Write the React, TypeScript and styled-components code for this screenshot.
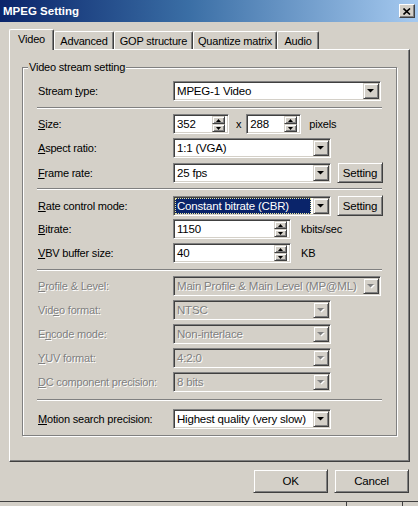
import React from "react";
import styled, { createGlobalStyle } from "styled-components";

const GlobalStyle = createGlobalStyle`
  html, body {
    margin: 0;
    padding: 0;
    background: #d4d0c8;
  }
  body {
    font-family: "Liberation Sans", Arial, sans-serif;
    font-size: 11px;
    letter-spacing: -0.2px;
    color: #000;
  }
`;

const Window = styled.div`
  width: 418px;
  height: 506px;
  display: flex;
  flex-direction: column;
  background: #d4d0c8;
  overflow: hidden;
`;

const TitleBar = styled.div`
  height: 22px;
  display: flex;
  align-items: center;
  justify-content: space-between;
  padding: 0 3px 0 3px;
  box-sizing: border-box;
  background: linear-gradient(to right, #0a246a 0%, #3a6ea5 45%, #a6caf0 100%);
`;

const Title = styled.span`
  color: #fff;
  font-weight: bold;
  font-size: 11.5px;
  letter-spacing: 0;
`;

const CloseButton = styled.div`
  width: 16px;
  height: 14px;
  box-sizing: border-box;
  background: #d4d0c8;
  border: 1px solid;
  border-color: #fff #404040 #404040 #fff;
  box-shadow: inset -1px -1px 0 #808080;
  display: flex;
  align-items: center;
  justify-content: center;
`;

const Body = styled.div`
  padding: 7px 8px 0 9px;
  display: flex;
  flex-direction: column;
`;

const TabStrip = styled.div`
  display: flex;
  align-items: flex-end;
  height: 20px;
`;

const Tab = styled.div<{ $width: number; $active?: boolean }>`
  width: ${(p) => p.$width}px;
  height: ${(p) => (p.$active ? 21 : 18)}px;
  margin-bottom: ${(p) => (p.$active ? -1 : 0)}px;
  position: relative;
  z-index: ${(p) => (p.$active ? 2 : 0)};
  box-sizing: border-box;
  background: #d4d0c8;
  border-top: 1px solid #fff;
  border-left: 1px solid #fff;
  border-right: 1px solid #404040;
  border-radius: 2px 2px 0 0;
  box-shadow: inset -1px 0 0 #808080;
  display: flex;
  align-items: center;
  justify-content: center;
  padding-bottom: ${(p) => (p.$active ? 2 : 0)}px;
  white-space: nowrap;
`;

const Panel = styled.div`
  height: 413px;
  box-sizing: border-box;
  border: 1px solid;
  border-color: #fff #404040 #404040 #fff;
  box-shadow: inset -1px -1px 0 #808080;
  padding: 17px 12px 0 12px;
`;

const Group = styled.div`
  position: relative;
  border: 1px solid #808080;
  box-shadow: inset 1px 1px 0 #fff, 1px 1px 0 #fff;
  padding: 13px 14px 6px 14px;
  display: flex;
  flex-direction: column;
`;

const Legend = styled.span`
  position: absolute;
  top: -7px;
  left: 5px;
  line-height: 13px;
  padding: 0 1px;
  background: #d4d0c8;
`;

const Section = styled.div`
  display: flex;
  flex-direction: column;
  gap: 4px;
`;

const Separator = styled.div<{ $top?: number; $bottom?: number }>`
  height: 0;
  border-top: 1px solid #808080;
  border-bottom: 1px solid #fff;
  margin-top: ${(p) => p.$top ?? 6}px;
  margin-bottom: ${(p) => p.$bottom ?? 5}px;
`;

const Row = styled.div`
  display: grid;
  grid-template-columns: 136px 1fr;
  align-items: center;
  height: 20px;
`;

const Label = styled.span<{ $disabled?: boolean }>`
  padding-left: 1px;
  white-space: nowrap;
  color: ${(p) => (p.$disabled ? "#808080" : "#000")};
  text-shadow: ${(p) => (p.$disabled ? "1px 1px 0 #fff" : "none")};
`;

const Key = styled.span`
  text-decoration: underline;
  text-underline-offset: 1px;
`;

const Controls = styled.div`
  display: flex;
  align-items: center;
`;

const Field = styled.div<{ $width: number; $disabled?: boolean }>`
  width: ${(p) => p.$width}px;
  height: 20px;
  box-sizing: border-box;
  display: flex;
  align-items: stretch;
  padding: 1px;
  background: ${(p) => (p.$disabled ? "#d4d0c8" : "#fff")};
  border: 1px solid;
  border-color: #808080 #fff #fff #808080;
  box-shadow: inset 1px 1px 0 #404040, inset -1px -1px 0 #d4d0c8;
`;

const FieldText = styled.div<{ $disabled?: boolean; $focused?: boolean }>`
  flex: 1;
  min-width: 0;
  display: flex;
  align-items: center;
  padding-left: 2px;
  margin-right: ${(p) => (p.$focused ? 2 : 0)}px;
  white-space: nowrap;
  overflow: hidden;
  font-size: 11.5px;
  box-sizing: border-box;
  color: ${(p) => (p.$disabled ? "#808080" : p.$focused ? "#fff" : "#000")};
  text-shadow: ${(p) => (p.$disabled ? "1px 1px 0 #fff" : "none")};
  background: ${(p) => (p.$focused ? "#0a246a" : "transparent")};
  outline: ${(p) => (p.$focused ? "1px dotted #e8e8a0" : "none")};
  outline-offset: -1px;
`;

const RaisedBox = styled.div`
  box-sizing: border-box;
  background: #d4d0c8;
  border: 1px solid;
  border-color: #d4d0c8 #404040 #404040 #d4d0c8;
  box-shadow: inset 1px 1px 0 #fff, inset -1px -1px 0 #808080;
  display: flex;
  align-items: center;
  justify-content: center;
`;

const ArrowButton = styled(RaisedBox)`
  width: 16px;
  flex-shrink: 0;
`;

const Spinner = styled.div`
  width: 13px;
  flex-shrink: 0;
  margin: 0 2px 0 0;
  display: flex;
  flex-direction: column;
`;

const SpinButton = styled(RaisedBox)`
  flex: 1;
`;

const PushButton = styled(RaisedBox)<{ $width: number; $height: number }>`
  width: ${(p) => p.$width}px;
  height: ${(p) => p.$height}px;
  font-size: 11.5px;
`;

const Unit = styled.span<{ $left: number; $right?: number }>`
  margin-left: ${(p) => p.$left}px;
  margin-right: ${(p) => p.$right ?? 0}px;
`;

const Footer = styled.div`
  display: flex;
  justify-content: flex-end;
  gap: 6px;
  padding: 7px 1px 0 0;
`;

const BottomEdge = styled.div`
  margin-top: auto;
  height: 4px;
  border-top: 1px solid #404040;
  display: flex;
`;

const Tick = styled.div<{ $left: number }>`
  width: 1px;
  height: 4px;
  margin-left: ${(p) => p.$left}px;
  background: #404040;
`;

function DownArrow({ disabled }: { disabled?: boolean }) {
  return (
    <svg width="8" height="6" viewBox="0 0 8 6">
      {disabled && <polygon points="1,2 8,2 4.5,5.5" fill="#fff" />}
      <polygon points="0,1 7,1 3.5,4.5" fill={disabled ? "#808080" : "#000"} />
    </svg>
  );
}

function SpinArrow({ up }: { up?: boolean }) {
  return (
    <svg width="5" height="3" viewBox="0 0 5 3">
      <polygon points={up ? "0,3 5,3 2.5,0" : "0,0 5,0 2.5,3"} fill="#000" />
    </svg>
  );
}

function Combo({
  value,
  width,
  disabled,
  focused,
}: {
  value: string;
  width: number;
  disabled?: boolean;
  focused?: boolean;
}) {
  return (
    <Field $width={width} $disabled={disabled}>
      <FieldText $disabled={disabled} $focused={focused}>
        {value}
      </FieldText>
      <ArrowButton>
        <DownArrow disabled={disabled} />
      </ArrowButton>
    </Field>
  );
}

function Spin({ value, width }: { value: string; width: number }) {
  return (
    <Field $width={width}>
      <FieldText>{value}</FieldText>
      <Spinner>
        <SpinButton>
          <SpinArrow up />
        </SpinButton>
        <SpinButton>
          <SpinArrow />
        </SpinButton>
      </Spinner>
    </Field>
  );
}

const tabs = [
  { name: "Video", width: 45, active: true },
  { name: "Advanced", width: 60 },
  { name: "GOP structure", width: 79 },
  { name: "Quantize matrix", width: 84 },
  { name: "Audio", width: 42 },
];

export default function App() {
  return (
    <>
      <GlobalStyle />
      <Window>
        <TitleBar>
          <Title>MPEG Setting</Title>
          <CloseButton>
            <svg width="8" height="7" viewBox="0 0 8 7">
              <path d="M0.5 0.5 L7 6.5 M7 0.5 L0.5 6.5" stroke="#000" strokeWidth="1.6" />
            </svg>
          </CloseButton>
        </TitleBar>
        <Body>
          <TabStrip>
            {tabs.map((t) => (
              <Tab key={t.name} $width={t.width} $active={t.active}>
                {t.name}
              </Tab>
            ))}
          </TabStrip>
          <Panel>
            <Group>
              <Legend>Video stream setting</Legend>
              <Section>
                <Row>
                  <Label>
                    Stream <Key>t</Key>ype:
                  </Label>
                  <Controls>
                    <Combo value="MPEG-1 Video" width={208} />
                  </Controls>
                </Row>
              </Section>
              <Separator />
              <Section>
                <Row>
                  <Label>
                    <Key>S</Key>ize:
                  </Label>
                  <Controls>
                    <Spin value="352" width={56} />
                    <Unit $left={7} $right={5}>
                      x
                    </Unit>
                    <Spin value="288" width={55} />
                    <Unit $left={8}>pixels</Unit>
                  </Controls>
                </Row>
                <Row>
                  <Label>
                    <Key>A</Key>spect ratio:
                  </Label>
                  <Controls>
                    <Combo value="1:1 (VGA)" width={158} />
                  </Controls>
                </Row>
                <Row>
                  <Label>
                    <Key>F</Key>rame rate:
                  </Label>
                  <Controls>
                    <Combo value="25 fps" width={158} />
                    <Unit $left={6} />
                    <PushButton $width={46} $height={21}>
                      Setting
                    </PushButton>
                  </Controls>
                </Row>
              </Section>
              <Separator />
              <Section>
                <Row>
                  <Label>
                    <Key>R</Key>ate control mode:
                  </Label>
                  <Controls>
                    <Combo value="Constant bitrate (CBR)" width={158} focused />
                    <Unit $left={6} />
                    <PushButton $width={46} $height={21}>
                      Setting
                    </PushButton>
                  </Controls>
                </Row>
                <Row>
                  <Label>
                    <Key>B</Key>itrate:
                  </Label>
                  <Controls>
                    <Spin value="1150" width={118} />
                    <Unit $left={10}>kbits/sec</Unit>
                  </Controls>
                </Row>
                <Row>
                  <Label>
                    <Key>V</Key>BV buffer size:
                  </Label>
                  <Controls>
                    <Spin value="40" width={118} />
                    <Unit $left={10}>KB</Unit>
                  </Controls>
                </Row>
              </Section>
              <Separator />
              <Section>
                <Row>
                  <Label $disabled>
                    <Key>P</Key>rofile &amp; Level:
                  </Label>
                  <Controls>
                    <Combo value="Main Profile & Main Level (MP@ML)" width={208} disabled />
                  </Controls>
                </Row>
                <Row>
                  <Label $disabled>
                    Vid<Key>e</Key>o format:
                  </Label>
                  <Controls>
                    <Combo value="NTSC" width={158} disabled />
                  </Controls>
                </Row>
                <Row>
                  <Label $disabled>
                    E<Key>n</Key>code mode:
                  </Label>
                  <Controls>
                    <Combo value="Non-interlace" width={158} disabled />
                  </Controls>
                </Row>
                <Row>
                  <Label $disabled>
                    <Key>Y</Key>UV format:
                  </Label>
                  <Controls>
                    <Combo value="4:2:0" width={158} disabled />
                  </Controls>
                </Row>
                <Row>
                  <Label $disabled>
                    <Key>D</Key>C component precision:
                  </Label>
                  <Controls>
                    <Combo value="8 bits" width={158} disabled />
                  </Controls>
                </Row>
              </Section>
              <Separator $top={7} $bottom={8} />
              <Section>
                <Row>
                  <Label>
                    <Key>M</Key>otion search precision:
                  </Label>
                  <Controls>
                    <Combo value="Highest quality (very slow)" width={158} />
                  </Controls>
                </Row>
              </Section>
            </Group>
          </Panel>
          <Footer>
            <PushButton $width={75} $height={24}>
              OK
            </PushButton>
            <PushButton $width={75} $height={24}>
              Cancel
            </PushButton>
          </Footer>
        </Body>
        <BottomEdge>
          <Tick $left={346} />
          <Tick $left={55} />
        </BottomEdge>
      </Window>
    </>
  );
}
